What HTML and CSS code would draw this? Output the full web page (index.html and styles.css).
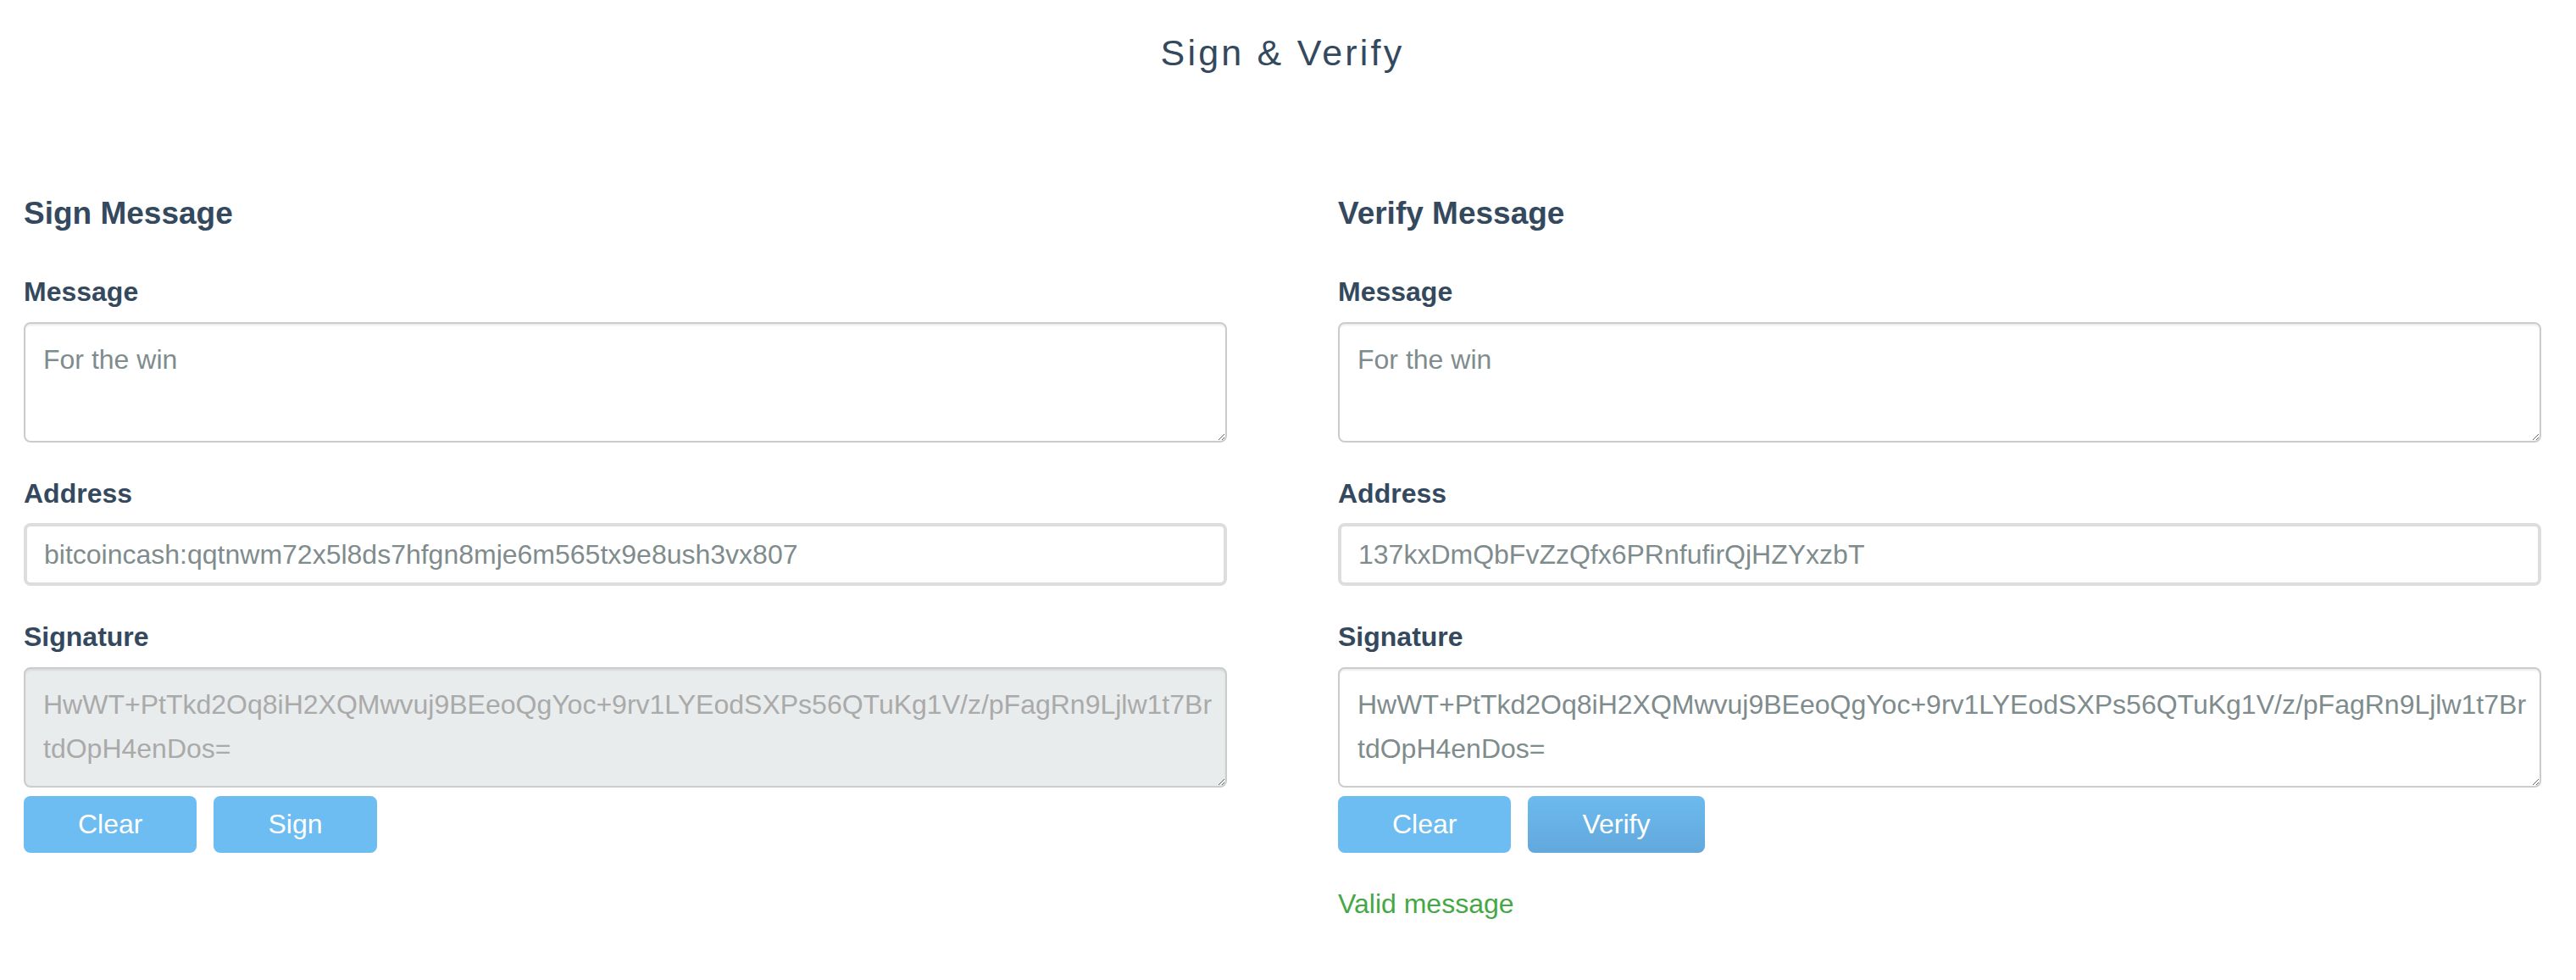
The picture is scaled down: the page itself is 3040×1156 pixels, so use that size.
FILE: index.html
```html
<!DOCTYPE html>
<html lang="en">
<head>
<meta charset="utf-8">
<title>Sign &amp; Verify</title>
<link rel="stylesheet" href="styles.css">
</head>
<body>
<div class="page">
  <h1 class="title">Sign &amp; Verify</h1>
  <div class="columns">
    <section class="panel">
      <h2 class="panel-title">Sign Message</h2>
      <div class="form-group">
        <label class="field-label">Message</label>
        <textarea class="field-area">For the win</textarea>
      </div>
      <div class="form-group">
        <label class="field-label">Address</label>
        <input class="field-input" type="text" value="bitcoincash:qqtnwm72x5l8ds7hfgn8mje6m565tx9e8ush3vx807">
      </div>
      <div class="form-group last">
        <label class="field-label">Signature</label>
        <textarea class="field-area is-disabled" readonly>HwWT+PtTkd2Oq8iH2XQMwvuj9BEeoQgYoc+9rv1LYEodSXPs56QTuKg1V/z/pFagRn9Ljlw1t7BrtdOpH4enDos=</textarea>
      </div>
      <div class="actions">
        <button class="btn" type="button">Clear</button>
        <button class="btn" type="button">Sign</button>
      </div>
    </section>
    <section class="panel">
      <h2 class="panel-title">Verify Message</h2>
      <div class="form-group">
        <label class="field-label">Message</label>
        <textarea class="field-area">For the win</textarea>
      </div>
      <div class="form-group">
        <label class="field-label">Address</label>
        <input class="field-input" type="text" value="137kxDmQbFvZzQfx6PRnfufirQjHZYxzbT">
      </div>
      <div class="form-group last">
        <label class="field-label">Signature</label>
        <textarea class="field-area">HwWT+PtTkd2Oq8iH2XQMwvuj9BEeoQgYoc+9rv1LYEodSXPs56QTuKg1V/z/pFagRn9Ljlw1t7BrtdOpH4enDos=</textarea>
      </div>
      <div class="actions">
        <button class="btn" type="button">Clear</button>
        <button class="btn btn-active" type="button">Verify</button>
      </div>
      <p class="result">Valid message</p>
    </section>
  </div>
</div>
</body>
</html>
```

FILE: styles.css
```css
html, body {
  margin: 0;
  padding: 0;
  background: #ffffff;
}

body {
  font-family: "Liberation Sans", Arial, Helvetica, sans-serif;
  color: #34495e;
}

.page {
  padding: 37px 41px 0 28px;
}

.title {
  margin: 0;
  font-size: 43px;
  line-height: 50px;
  font-weight: normal;
  letter-spacing: 3.2px;
  text-align: center;
  color: #34495e;
}

.columns {
  display: grid;
  grid-template-columns: 1fr 1fr;
  column-gap: 131px;
  margin-top: 144px;
}

.panel {
  display: flex;
  flex-direction: column;
}

.panel-title {
  margin: 0 0 52px 0;
  font-size: 37px;
  line-height: 41px;
  font-weight: bold;
  color: #34495e;
}

.form-group {
  display: flex;
  flex-direction: column;
  margin-bottom: 40px;
}

.form-group.last {
  margin-bottom: 0;
}

.field-label {
  display: block;
  font-size: 32px;
  line-height: 40px;
  font-weight: bold;
  margin-bottom: 15.5px;
  color: #34495e;
}

.field-area {
  display: block;
  box-sizing: border-box;
  width: 100%;
  height: 142px;
  margin: 0;
  padding: 16px 14px 16px 21px;
  border: 2px solid #cccccc;
  border-radius: 8px;
  box-shadow: inset 0 2px 2px rgba(0, 0, 0, 0.075);
  font-family: "Liberation Sans", Arial, Helvetica, sans-serif;
  font-size: 32px;
  line-height: 52px;
  color: #7f8c8d;
  background: #ffffff;
  word-break: break-all;
  resize: vertical;
  outline: none;
}

.field-area.is-disabled {
  background: #e9ecec;
  color: #aaaaaa;
}

.field-input {
  display: block;
  box-sizing: border-box;
  width: 100%;
  height: 74px;
  margin: 0;
  padding: 0 20px;
  border: 4px solid #dddddd;
  border-radius: 8px;
  font-family: "Liberation Sans", Arial, Helvetica, sans-serif;
  font-size: 32px;
  color: #7f8c8d;
  background: #ffffff;
  outline: none;
}

.actions {
  display: flex;
  gap: 20px;
  margin-top: 10px;
}

.btn {
  height: 67.5px;
  margin: 0;
  padding: 0 64px;
  border: 0;
  border-radius: 8px;
  background: #6dbcf2;
  color: #ffffff;
  font-family: "Liberation Sans", Arial, Helvetica, sans-serif;
  font-size: 32px;
  line-height: 67.5px;
}

.btn-active {
  background: linear-gradient(to bottom, #6cbaef 0%, #62a8dc 100%);
}

.result {
  margin: 39.7px 0 0 0;
  font-size: 32px;
  line-height: 40px;
  color: #44a844;
}
```
